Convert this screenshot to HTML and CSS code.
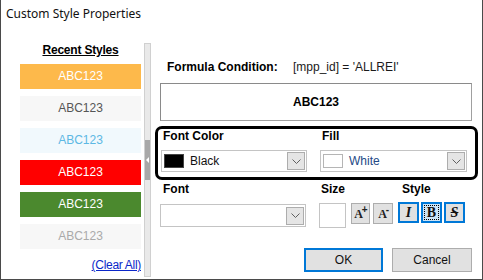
FILE: index.html
```html
<!DOCTYPE html>
<html lang="en">
<head>
  <meta charset="UTF-8">
  <title>Custom Style Properties</title>
  <link rel="stylesheet" href="styles.css">
</head>
<body>

<div class="ventana">
  <div class="titulo">Custom Style Properties</div>

  <div class="cuerpo">
    <div class="recientes">
      <div class="recientes-titulo">Recent Styles</div>
      <div class="muestra naranja">ABC123</div>
      <div class="muestra gris">ABC123</div>
      <div class="muestra celeste">ABC123</div>
      <div class="muestra rojo">ABC123</div>
      <div class="muestra verde">ABC123</div>
      <div class="muestra tenue">ABC123</div>
      <a class="limpiar" href="#">(Clear All)</a>
    </div>

    <div class="divisor"><div class="divisor-mango"><span class="flecha"></span></div></div>

    <div class="panel">
      <div class="formula">
        <span class="formula-label">Formula Condition:</span>
        <span>[mpp_id] = 'ALLREI'</span>
      </div>

      <div class="vista">ABC123</div>

      <div class="colores">
        <div class="grupo">
          <div class="etiqueta">Font Color</div>
          <div class="combo">
            <span class="color negro"></span>
            <span class="combo-texto">Black</span>
            <span class="combo-boton"><svg width="9" height="5" viewBox="0 0 9 5"><polyline points="0.5,0.5 4.5,4.5 8.5,0.5" fill="none" stroke="#606060"/></svg></span>
          </div>
        </div>
        <div class="grupo">
          <div class="etiqueta">Fill</div>
          <div class="combo">
            <span class="color blanco"></span>
            <span class="combo-texto azul">White</span>
            <span class="combo-boton"><svg width="9" height="5" viewBox="0 0 9 5"><polyline points="0.5,0.5 4.5,4.5 8.5,0.5" fill="none" stroke="#606060"/></svg></span>
          </div>
        </div>
      </div>

      <div class="fuente">
        <div class="grupo-fuente">
          <div class="etiqueta">Font</div>
          <div class="combo combo-fuente">
            <span class="combo-texto"></span>
            <span class="combo-boton"><svg width="9" height="5" viewBox="0 0 9 5"><polyline points="0.5,0.5 4.5,4.5 8.5,0.5" fill="none" stroke="#606060"/></svg></span>
          </div>
        </div>
        <div class="grupo-tamano">
          <div class="etiqueta">Size</div>
          <div class="fila">
            <div class="caja-tamano"></div>
            <button class="boton-a">A<sup>+</sup></button>
            <button class="boton-a menos">A<sup>-</sup></button>
          </div>
        </div>
        <div class="grupo-estilo">
          <div class="etiqueta">Style</div>
          <div class="fila estilos">
            <button class="boton-estilo cursiva">I</button>
            <button class="boton-estilo negrita"><span>B</span></button>
            <button class="boton-estilo tachado">S</button>
          </div>
        </div>
      </div>

      <div class="acciones">
        <button class="boton ok">OK</button>
        <button class="boton">Cancel</button>
      </div>
    </div>
  </div>
</div>

</body>
</html>
```

FILE: styles.css
```css
body { margin: 0; font-family: "Liberation Sans", Arial, sans-serif; font-size: 12px; color: #000; }
.ventana {
  width: 483px; height: 280px; box-sizing: border-box;
  border: 1px solid #4a4a4a; border-top: none;
  background: white; display: flex; flex-direction: column;
}
.titulo {
  height: 29px; line-height: 28px; padding-left: 5px;
  font-family: "Noto Sans", "Open Sans", sans-serif; font-size: 12px; color: #111;
}
.cuerpo { display: flex; flex: 1; }

/* columna izquierda */
.recientes {
  width: 121px; padding: 14px 3px 0 19px;
  display: flex; flex-direction: column;
}
.recientes-titulo {
  text-align: center; font-weight: bold; text-decoration: underline;
  line-height: 14px; margin-bottom: 7px; letter-spacing: -0.2px;
}
.muestra {
  height: 25px; line-height: 25px; margin-bottom: 7px;
  text-align: center;
}
.naranja { background: #fdb94b; color: #fff; }
.gris { background: #f7f7f7; color: #555; }
.celeste { background: #f1f9fd; color: #5cb8e4; }
.rojo { background: #ff0000; color: #fff; }
.verde { background: #4b892e; color: #fff; }
.tenue { background: #f7f7f7; color: #aaa; }
.limpiar {
  align-self: flex-end; margin-top: 2px; line-height: 14px;
  color: #0b27c9; text-decoration: underline; letter-spacing: -0.3px;
}

/* divisor */
.divisor {
  width: 5px; margin-top: 14px; height: 232px;
  border: 1px solid #d0d0d0; background: #e9e9e9;
  display: flex; align-items: center;
}
.divisor-mango {
  width: 5px; height: 40px; background: #a8a8a8;
  display: flex; align-items: center; justify-content: center;
}
.flecha {
  width: 0; height: 0;
  border-top: 3px solid transparent; border-bottom: 3px solid transparent;
  border-right: 3px solid #fff;
}

/* panel derecho */
.panel { flex: 1; display: flex; flex-direction: column; padding-top: 31px; }
.formula { padding-left: 16px; line-height: 14px; display: flex; color: #1a1a1a; }
.formula-label { font-weight: bold; width: 126px; color: #000; }
.vista {
  margin: 9px 0 0 9px; width: 312px; height: 38px; box-sizing: border-box;
  border: 1px solid #a0a0a0; border-top-color: #8a8a8a; border-left-color: #8a8a8a;
  font-weight: bold; text-align: center; line-height: 36px;
}
.colores {
  margin: 5px 0 0 4px; width: 323px; height: 54px; box-sizing: border-box;
  border: 3px solid #000; border-radius: 7px;
  padding: 0 0 0 3px;
  display: grid; grid-template-columns: 146px 147px; column-gap: 13px;
}
.etiqueta { font-weight: bold; line-height: 14px; padding-left: 2px; margin-bottom: 7px; }
.combo {
  height: 22px; box-sizing: border-box;
  border: 1px solid #c4c4c4; background: #fff;
  display: flex; align-items: center; padding: 0 1px 0 2px;
}
.color { width: 20px; height: 14px; box-sizing: border-box; border: 1px solid #9a9a9a; }
.negro { background: #000; border-color: #444; }
.blanco { background: #fff; border-color: #b5b5b5; }
.combo-texto { flex: 1; padding-left: 6px; font-size: 12px; color: #111; }
.combo-texto.azul { color: #244a86; }
.combo-boton {
  width: 16px; height: 16px; border: 1px solid #adadad; background: #e5e5e5;
  display: flex; align-items: center; justify-content: center;
}

.fuente { display: flex; margin-top: 2px; padding-left: 9px; }
.grupo-fuente { width: 146px; margin-right: 13px; }
.grupo-fuente .etiqueta { padding-left: 3px; margin-bottom: 8px; }
.combo-fuente { height: 23px; }
.grupo-tamano { width: 74px; margin-right: 5px; }
.grupo-tamano .etiqueta { margin-bottom: 7px; }
.grupo-estilo .etiqueta { padding-left: 4px; margin-bottom: 6px; }
.fila { display: flex; gap: 3px; align-items: flex-start; }
.caja-tamano {
  width: 27px; height: 25px; box-sizing: border-box;
  border: 1px solid #c4c4c4; margin-right: 2px;
}
button { font-family: inherit; font-size: 12px; padding: 0; cursor: pointer; }
.boton-a {
  width: 20px; height: 21px; margin-top: 0;
  border: 1px solid #adadad; background: #e1e1e1;
  font-family: "Liberation Serif", serif; font-weight: bold; font-size: 12px; color: #222;
  line-height: 18px; letter-spacing: -1px;
}
.boton-a sup { font-family: "Liberation Sans", sans-serif; font-size: 10px; line-height: 0; }
.estilos { gap: 2px; margin-top: 1px; }
.boton-estilo {
  width: 21px; height: 21px; box-sizing: border-box;
  border: 2px solid #0078d7; background: #e1e1e1;
  font-family: "Liberation Serif", serif; font-size: 14px; font-weight: bold; color: #111;
  display: flex; align-items: center; justify-content: center;
}
.cursiva { font-style: italic; }
.negrita { background: #cce4f7; }
.negrita span { border: 1px dotted #000; padding: 0 2px; line-height: 13px; }
.tachado { font-style: italic; text-decoration: line-through; }

.acciones { display: flex; justify-content: flex-end; gap: 9px; margin-top: 20px; padding-right: 10px; }
.boton {
  width: 80px; height: 24px; box-sizing: border-box;
  border: 1px solid #adadad; background: #e1e1e1; color: #111;
}
.boton.ok { border: 2px solid #0078d7; width: 79px; }
```
